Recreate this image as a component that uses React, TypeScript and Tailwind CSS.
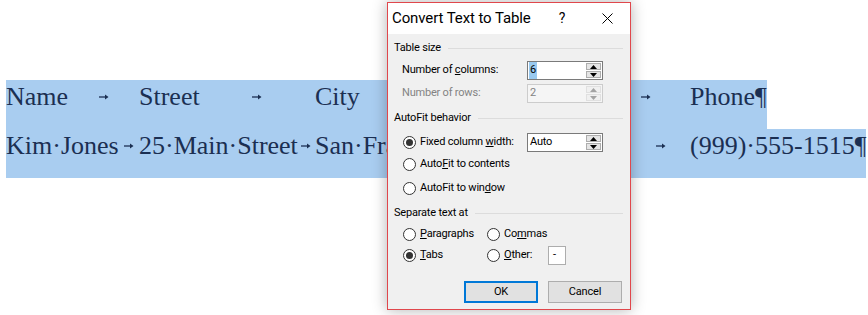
import React from "react";

const ui = "font-['Segoe_UI','Roboto','Liberation_Sans',sans-serif]";
const small = "text-[11px] tracking-[-0.2px]";

function TabArrow() {
  return (
    <svg width="10" height="8" viewBox="0 0 10 8" className="shrink-0">
      <path d="M0 4H7" stroke="#1b2f52" strokeWidth="1.3" />
      <path d="M6 1.5L9.5 4L6 6.5Z" fill="#1b2f52" />
    </svg>
  );
}

// one tab-separated cell: text, then the tab arrow centred in the gap up to the next stop
function Cell({ text, width, last }: { text: string; width?: number; last?: boolean }) {
  if (last) return <span className="whitespace-nowrap">{text}</span>;
  return (
    <div className="flex shrink-0 items-center" style={{ width }}>
      <span className="whitespace-nowrap">{text}</span>
      <div className="flex flex-1 justify-center">
        <TabArrow />
      </div>
    </div>
  );
}

const stops = [133, 176, 165, 86, 124];

function DocRow({ cells }: { cells: string[] }) {
  return (
    <div className="flex h-[49px] w-max items-start bg-[#a9cdf0] text-[26px] leading-[34px] text-[#1b2f52] font-['Liberation_Serif',serif]">
      {cells.map((c, i) => (
        <Cell key={i} text={c} width={stops[i]} last={i === cells.length - 1} />
      ))}
    </div>
  );
}

function Spin({ value, disabled, selected }: { value: string; disabled?: boolean; selected?: boolean }) {
  const arrow = disabled ? "#a3a3a3" : "#000";
  const btn = disabled ? "border-[#e0e0e0] bg-[#f0f0f0]" : "border-[#adadad] bg-[#e5e5e5]";
  return (
    <div
      className={`flex h-[19px] w-[76px] items-stretch border ${
        disabled ? "border-[#cccccc] bg-[#f5f5f5]" : "border-[#7a7a7a] bg-white"
      }`}
    >
      <div className={`flex flex-1 items-center pl-[1px] ${small} ${disabled ? "text-[#838383]" : "text-black"}`}>
        <span className={selected ? "bg-[#99c9ef] px-[1px]" : "px-[1px]"}>{value}</span>
      </div>
      <div className="flex w-[16px] flex-col gap-px py-px pr-px">
        <div className={`flex flex-1 items-center justify-center border ${btn}`}>
          <svg width="7" height="4" viewBox="0 0 7 4">
            <path d="M3.5 0L7 4H0Z" fill={arrow} />
          </svg>
        </div>
        <div className={`flex flex-1 items-center justify-center border ${btn}`}>
          <svg width="7" height="4" viewBox="0 0 7 4">
            <path d="M0 0H7L3.5 4Z" fill={arrow} />
          </svg>
        </div>
      </div>
    </div>
  );
}

function Radio({ checked, children }: { checked?: boolean; children: React.ReactNode }) {
  return (
    <div className={`flex items-center gap-[4px] text-black ${small}`}>
      <div className="flex h-[13px] w-[13px] shrink-0 items-center justify-center rounded-full border border-[#333333] bg-white">
        {checked && <div className="h-[7px] w-[7px] rounded-full bg-[#333333]" />}
      </div>
      <span className="whitespace-nowrap">{children}</span>
    </div>
  );
}

function GroupTitle({ label }: { label: string }) {
  return (
    <div className={`flex h-[14px] items-center gap-[7px] text-black ${small}`}>
      <span className="whitespace-nowrap">{label}</span>
      <div className="h-px flex-1 bg-[#dcdcdc]" />
    </div>
  );
}

function Dialog() {
  return (
    <div className={`absolute left-[387px] top-[2px] flex h-[308px] w-[244px] flex-col border border-[#e0474c] bg-[#f0f0f0] shadow-[0_0_14px_rgba(0,0,0,0.3)] ${ui}`}>
      {/* title bar */}
      <div className="flex h-[31px] shrink-0 items-center bg-white">
        <span className="flex-1 pl-[4px] text-[15px] tracking-[-0.1px] text-black">Convert Text to Table</span>
        <div className="flex h-full w-[44px] items-center justify-center text-[14px] text-black">?</div>
        <div className="flex h-full w-[46px] items-center justify-center">
          <svg width="11" height="11" viewBox="0 0 11 11">
            <path d="M0.5 0.5L10.5 10.5M10.5 0.5L0.5 10.5" stroke="#000" strokeWidth="1" />
          </svg>
        </div>
      </div>

      <div className="flex flex-1 flex-col pl-[6px] pr-[7px] pt-[7px]">
        <GroupTitle label="Table size" />
        <div className={`mt-[6px] flex items-center pl-[8px] text-black ${small}`}>
          <span className="w-[125px]">
            Number of <u>c</u>olumns:
          </span>
          <Spin value="6" selected />
        </div>
        <div className={`mt-[4px] flex items-center pl-[8px] text-[#838383] ${small}`}>
          <span className="w-[125px]">Number of rows:</span>
          <Spin value="2" disabled />
        </div>

        <div className="mt-[8px]">
          <GroupTitle label="AutoFit behavior" />
        </div>
        <div className="mt-[8px] flex items-center pl-[9px]">
          <div className="w-[124px]">
            <Radio checked>
              Fixed column <u>w</u>idth:
            </Radio>
          </div>
          <Spin value="Auto" />
        </div>
        <div className="mt-[2px] flex h-[20px] items-center pl-[9px]">
          <Radio>
            Auto<u>F</u>it to contents
          </Radio>
        </div>
        <div className="mt-[4px] flex h-[20px] items-center pl-[9px]">
          <Radio>
            AutoFit to win<u>d</u>ow
          </Radio>
        </div>

        <div className="mt-[8px]">
          <GroupTitle label="Separate text at" />
        </div>
        <div className="mt-[4px] flex h-[20px] items-center pl-[9px]">
          <div className="w-[84px]">
            <Radio>
              <u>P</u>aragraphs
            </Radio>
          </div>
          <Radio>
            Co<u>m</u>mas
          </Radio>
        </div>
        <div className="mt-[1px] flex h-[20px] items-center pl-[9px]">
          <div className="w-[84px]">
            <Radio checked>
              <u>T</u>abs
            </Radio>
          </div>
          <div className="w-[61px]">
            <Radio>
              <u>O</u>ther:
            </Radio>
          </div>
          <div className={`flex h-[19px] w-[18px] items-center border border-[#adadad] bg-white pl-[4px] text-black ${small}`}>
            -
          </div>
        </div>

        <div className="mt-[16px] flex justify-end gap-[10px] pr-[1px]">
          <button className={`h-[22px] w-[74px] border-2 border-[#0078d7] bg-[#e1e1e1] text-black ${small}`}>OK</button>
          <button className={`h-[22px] w-[74px] border border-[#adadad] bg-[#e1e1e1] text-black ${small}`}>Cancel</button>
        </div>
      </div>
    </div>
  );
}

export default function App() {
  return (
    <div className="relative h-[315px] w-[868px] overflow-hidden bg-white">
      <div className="flex flex-col pl-[6px] pt-[80px]">
        <DocRow cells={["Name", "Street", "City", "State", "Zip", "Phone\u00b6"]} />
        <DocRow cells={["Kim\u00b7Jones", "25\u00b7Main\u00b7Street", "San\u00b7Francisco", "CA", "94101", "(999)\u00b7555-1515\u00b6"]} />
      </div>
      <Dialog />
    </div>
  );
}
